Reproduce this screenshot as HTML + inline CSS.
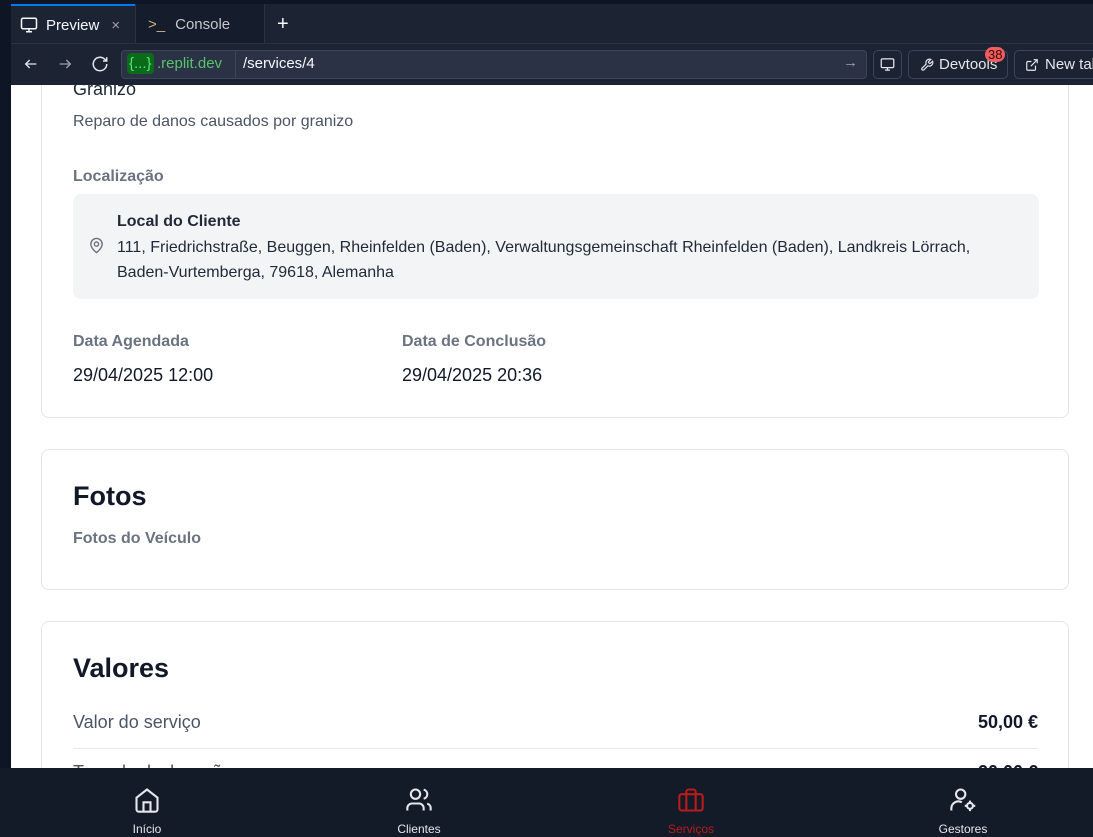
<!DOCTYPE html>
<html><head><meta charset="utf-8"><style>
*{box-sizing:border-box;margin:0;padding:0}
body{width:1093px;height:837px;overflow:hidden;background:#0e1525;font-family:"Liberation Sans",sans-serif;position:relative}
.topbar{position:absolute;left:11px;top:4px;right:0;height:40px;background:#1c2333}
.tab{position:absolute;top:0;height:40px;display:flex;align-items:center;color:#f5f9fc;font-size:15px}
.urlrow{position:absolute;left:11px;top:43px;right:0;height:42px;background:#1c2333;border-top:1px solid #2b3245}
.page{position:absolute;left:11px;top:85px;right:0;height:683px;background:#fff;overflow:hidden}
.card{position:absolute;left:30px;width:1028px;border:1px solid #e3e5e8;border-radius:8px;background:#fff}
.lbl{color:#6b7280;font-size:16px;font-weight:bold;position:absolute}
.txt{color:#1f2937;position:absolute}
.nav{position:absolute;left:0;top:768px;width:1093px;height:69px;background:#131a28}
.ni{position:absolute;top:0;width:120px;text-align:center;color:#e5e7eb;font-size:12px}
.ni svg{display:block;margin:18px auto 8px}
</style></head><body>
<div class="topbar">
  <div class="tab" style="left:0;width:124px;background:#1c2333;border-top:2px solid #0079f2;padding-left:9px">
    <svg width="18" height="18" viewBox="0 0 24 24" fill="none" stroke="#f5f9fc" stroke-width="2"><rect x="2" y="3" width="20" height="14" rx="2"/><path d="M8 21h8M12 17v4"/></svg>
    <span style="margin-left:8px">Preview</span><span style="margin-left:12px;color:#9da2a6">×</span></div>
  <div class="tab" style="left:124px;width:130px;border-left:1px solid #2b3245;border-right:1px solid #2b3245;padding-left:12px;color:#c2c8cc;background:#151c2b">
    <span style="color:#c9b37a">&gt;_</span><span style="margin-left:10px">Console</span></div>
  <div class="tab" style="left:266px;font-size:20px">+</div>
</div>
<div class="urlrow">
  <svg style="position:absolute;left:12px;top:12px" width="16" height="16" viewBox="0 0 24 24" fill="none" stroke="#e5e7eb" stroke-width="2"><path d="M20 12H4M10 6l-6 6 6 6"/></svg>
  <svg style="position:absolute;left:46px;top:12px" width="16" height="16" viewBox="0 0 24 24" fill="none" stroke="#9da2a6" stroke-width="2"><path d="M4 12h16M14 6l6 6-6 6"/></svg>
  <svg style="position:absolute;left:80px;top:11px" width="18" height="18" viewBox="0 0 24 24" fill="none" stroke="#e5e7eb" stroke-width="2"><path d="M21 12a9 9 0 1 1-3-6.7L21 8M21 3v5h-5"/></svg>
  <div style="position:absolute;left:110px;top:6px;width:746px;height:29px;background:#2b3245;border:1px solid #3c445c;border-radius:4px">
    <span style="position:absolute;left:5px;top:2px;background:#0a6b18;color:#58e07a;border-radius:4px;padding:2px 2px;font-size:15px">{...}</span>
    <span style="position:absolute;left:35px;top:4px;color:#58c46a;font-size:15px">.replit.dev</span>
    <div style="position:absolute;left:113px;top:0;bottom:0;border-left:1px solid #3c445c"></div>
    <span style="position:absolute;left:121px;top:4px;color:#f5f9fc;font-size:15px">/services/4</span>
    <span style="position:absolute;right:8px;top:3px;color:#9da2a6;font-size:15px">→</span>
  </div>
  <div style="position:absolute;left:862px;top:6px;width:29px;height:29px;border:1px solid #3c445c;border-radius:5px"><svg style="margin:6px" width="15" height="15" viewBox="0 0 24 24" fill="none" stroke="#e5e7eb" stroke-width="2"><rect x="2" y="3" width="20" height="14" rx="2"/><path d="M8 21h8M12 17v4"/></svg></div>
  <div style="position:absolute;left:897px;top:6px;width:100px;height:29px;border:1px solid #3c445c;border-radius:5px;color:#e5e7eb;font-size:15px;padding:5px 0 0 30px">Devtools
    <svg style="position:absolute;left:11px;top:7px" width="14" height="14" viewBox="0 0 24 24" fill="none" stroke="#e5e7eb" stroke-width="2"><path d="M14.7 6.3a1 1 0 0 0 0 1.4l1.6 1.6a1 1 0 0 0 1.4 0l3.8-3.8a6 6 0 0 1-7.9 7.9l-6.9 6.9a2.1 2.1 0 0 1-3-3l6.9-6.9a6 6 0 0 1 7.9-7.9z"/></svg></div>
  <div style="position:absolute;left:974px;top:3px;background:#f25d5d;color:#3a0a0a;border-radius:9px;font-size:13px;padding:0 3px">38</div>
  <div style="position:absolute;left:1003px;top:6px;width:100px;height:29px;border:1px solid #3c445c;border-radius:5px;color:#e5e7eb;font-size:15px;padding:5px 0 0 30px;white-space:nowrap">New tab
    <svg style="position:absolute;left:10px;top:7px" width="14" height="14" viewBox="0 0 24 24" fill="none" stroke="#e5e7eb" stroke-width="2"><path d="M18 13v6a2 2 0 0 1-2 2H5a2 2 0 0 1-2-2V8a2 2 0 0 1 2-2h6M15 3h6v6M10 14L21 3"/></svg></div>
</div>
<div class="page">
  <div class="card" style="top:-60px;height:393px">
    <div class="txt" style="left:31px;top:53px;font-size:18px">Granizo</div>
    <div class="txt" style="left:31px;top:87px;font-size:16px;color:#4b5563">Reparo de danos causados por granizo</div>
    <div class="lbl" style="left:31px;top:142px">Localização</div>
    <div style="position:absolute;left:31px;top:168px;width:966px;height:105px;background:#f3f4f6;border-radius:8px">
      <svg style="position:absolute;left:15px;top:43px" width="17" height="17" viewBox="0 0 24 24" fill="none" stroke="#6b7280" stroke-width="2"><path d="M20 10c0 6-8 12-8 12s-8-6-8-12a8 8 0 0 1 16 0z"/><circle cx="12" cy="10" r="3"/></svg>
      <div class="txt" style="left:44px;top:19px;font-size:16px;font-weight:bold">Local do Cliente</div>
      <div class="txt" style="left:44px;top:41px;font-size:16px;line-height:25px;width:905px">111, Friedrichstraße, Beuggen, Rheinfelden (Baden), Verwaltungsgemeinschaft Rheinfelden (Baden), Landkreis Lörrach, Baden-Vurtemberga, 79618, Alemanha</div>
    </div>
    <div class="lbl" style="left:31px;top:307px">Data Agendada</div>
    <div class="txt" style="left:31px;top:339px;font-size:18px;color:#111827">29/04/2025 12:00</div>
    <div class="lbl" style="left:360px;top:307px">Data de Conclusão</div>
    <div class="txt" style="left:360px;top:339px;font-size:18px;color:#111827">29/04/2025 20:36</div>
  </div>
  <div class="card" style="top:364px;height:141px">
    <div class="txt" style="left:31px;top:31px;font-size:27px;font-weight:bold;color:#111827">Fotos</div>
    <div class="lbl" style="left:31px;top:80px">Fotos do Veículo</div>
  </div>
  <div class="card" style="top:536px;height:200px">
    <div class="txt" style="left:31px;top:31px;font-size:27px;font-weight:bold;color:#111827">Valores</div>
    <div class="txt" style="left:31px;top:90px;font-size:18px;color:#4b5563">Valor do serviço</div>
    <div class="txt" style="right:30px;top:90px;font-size:18px;font-weight:bold;color:#111827">50,00 €</div>
    <div style="position:absolute;left:31px;right:30px;top:126px;border-top:1px solid #e5e7eb"></div>
    <div class="txt" style="left:31px;top:140px;font-size:18px;color:#4b5563">Taxa de deslocação</div>
    <div class="txt" style="right:30px;top:140px;font-size:18px;font-weight:bold;color:#111827">20,00 €</div>
  </div>
</div>
<div class="nav">
  <div class="ni" style="left:87px"><svg width="28" height="28" viewBox="0 0 24 24" fill="none" stroke="#e5e7eb" stroke-width="1.8"><path d="M3 10l9-7 9 7v10a2 2 0 0 1-2 2H5a2 2 0 0 1-2-2z"/><path d="M9 22v-8h6v8"/></svg>Início</div>
  <div class="ni" style="left:359px"><svg width="28" height="28" viewBox="0 0 24 24" fill="none" stroke="#e5e7eb" stroke-width="1.8"><circle cx="9" cy="7" r="4"/><path d="M2 21v-2a4 4 0 0 1 4-4h6a4 4 0 0 1 4 4v2M16 3.1a4 4 0 0 1 0 7.8M22 21v-2a4 4 0 0 0-3-3.9"/></svg>Clientes</div>
  <div class="ni" style="left:631px;color:#b91c1c"><svg width="28" height="28" viewBox="0 0 24 24" fill="none" stroke="#b91c1c" stroke-width="1.8"><rect x="2" y="7" width="20" height="14" rx="2"/><path d="M16 21V5a2 2 0 0 0-2-2h-4a2 2 0 0 0-2 2v16"/></svg>Serviços</div>
  <div class="ni" style="left:903px"><svg width="28" height="28" viewBox="0 0 24 24" fill="none" stroke="#e5e7eb" stroke-width="1.8"><circle cx="10" cy="7" r="4"/><path d="M2 21v-2a6 6 0 0 1 9-5"/><circle cx="18" cy="17" r="2.5"/><path d="M18 12.5v1.5M18 20v1.5M13.5 17H15M21 17h1.5"/></svg>Gestores</div>
</div>
</body></html>
